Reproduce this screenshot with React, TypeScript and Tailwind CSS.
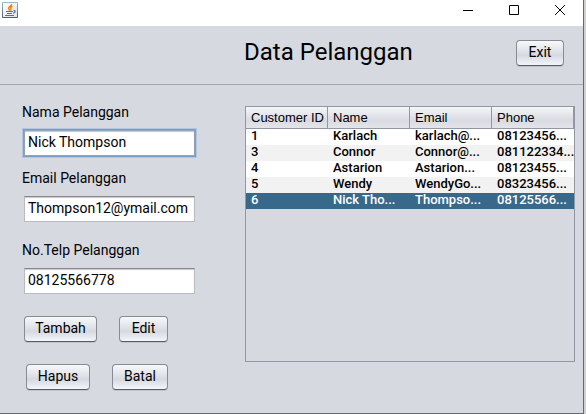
import { useState } from "react";

const columns = ["Customer ID", "Name", "Email", "Phone"];

const customers = [
  ["1", "Karlach", "karlach@...", "08123456..."],
  ["3", "Connor", "Connor@...", "081122334..."],
  ["4", "Astarion", "Astarion...", "08123455..."],
  ["5", "Wendy", "WendyGo...", "08323456..."],
  ["6", "Nick Tho...", "Thompso...", "08125566..."],
];

function JavaIcon() {
  return (
    <svg width="16" height="16" viewBox="0 0 16 16" aria-hidden="true">
      <defs>
        <linearGradient id="frame" x1="0" y1="0" x2="0" y2="1">
          <stop offset="0" stopColor="#9db9cc" />
          <stop offset="1" stopColor="#3f5f78" />
        </linearGradient>
        <linearGradient id="face" x1="0" y1="0" x2="1" y2="1">
          <stop offset="0" stopColor="#ffffff" />
          <stop offset="1" stopColor="#dfe4e8" />
        </linearGradient>
      </defs>
      <rect width="16" height="16" rx="1" fill="url(#frame)" />
      <rect x="1" y="1" width="14" height="14" fill="url(#face)" />
      <path d="M9.500 2c.6 1.700-3 2.600-3 4.200 0 1 1 1.500 1.500 2.500M10.500 4.200c-1.500.7-2.300 1.500-1.700 2.400.4.700.1 1.400-.4 1.900" fill="none" stroke="#ee8324" strokeWidth="1.500" />
      <path d="M4 9.500h7M5 11.500h5M11.500 8.500c2.400-.3 2.200 2.200-.4 2.600M3 13.500h9" fill="none" stroke="#4f7390" strokeWidth="1.200" />
    </svg>
  );
}

function PushButton({ label, className }: { label: string; className: string }) {
  return (
    <button
      type="button"
      className={`h-[26px] rounded border border-[#888b93] border-b-[#595b61] bg-linear-to-b from-[#f8f9fb] via-[#d6d9e0] via-60% to-[#f2f5fa] pb-0.5 text-center text-sm leading-5 shadow-[0_1px_0_#bfc2ca] ${className}`}
    >
      {label}
    </button>
  );
}

function Field({
  id,
  label,
  initial,
  focused,
}: {
  id: string;
  label: string;
  initial: string;
  focused?: boolean;
}) {
  const [value, setValue] = useState(initial);
  return (
    <div className="flex flex-col gap-2">
      <label htmlFor={id} className="-ml-0.5 text-sm leading-5">
        {label}
      </label>
      <input
        id={id}
        value={value}
        onChange={(e) => setValue(e.target.value)}
        className={`h-[26px] w-full border bg-white px-[3px] pb-0.5 text-sm leading-5 outline-none ${
          focused
            ? "border-[#8fa3ba] shadow-[inset_0_1px_1px_#c8c8c8,0_0_0_1px_#76a0cd,0_0_0_2px_#b3c6dd]"
            : "border-[#b9bbc0] border-t-[#86888e] shadow-[inset_0_1px_1px_#c8c8c8]"
        }`}
      />
    </div>
  );
}

export default function App() {
  return (
    <div className="flex h-screen bg-[#d2d1cf] pr-0.5 font-['Roboto','Liberation_Sans',sans-serif] text-black">
      <div className="flex min-w-0 flex-1 flex-col border-r border-b border-[#68696e] bg-[#d6d9e0]">
        <div className="flex h-[26px] shrink-0 items-start justify-between bg-white pt-0.5 pl-0.5">
          <JavaIcon />
          <div className="flex">
            {[
              ["Minimize", "M0 5.500h10"],
              ["Maximize", "M.5.500h9v9h-9z"],
              ["Close", "M0 0l10 10M10 0L0 10"],
            ].map(([name, path]) => (
              <button
                key={name}
                type="button"
                aria-label={name}
                className="flex h-4 w-[46px] items-center justify-center"
              >
                <svg width="10" height="10" viewBox="0 0 10 10" fill="none" stroke="#000" aria-hidden="true">
                  <path d={path} />
                </svg>
              </button>
            ))}
          </div>
        </div>

        <header className="flex h-[59px] shrink-0 items-center border-b border-[#a5a8b0] pr-[19px] pb-1 pl-[244px]">
          <h1 className="flex-1 pb-0.5 text-2xl leading-8 whitespace-nowrap">Data Pelanggan</h1>
          <PushButton label="Exit" className="w-12" />
        </header>

        <main className="flex min-h-0 flex-1 gap-[50px] pr-2 pb-[51px] pl-6">
          <form className="w-[171px] shrink-0 pt-[17px]">
            <div className="flex flex-col gap-3">
              <Field id="name" label="Nama Pelanggan" initial="Nick Thompson" focused />
              <Field id="email" label="Email Pelanggan" initial="Thompson12@ymail.com" />
            </div>
            <div className="pt-[18px]">
              <Field id="phone" label="No.Telp Pelanggan" initial="08125566778" />
            </div>
            <div className="flex gap-[22px] pt-[22px]">
              <PushButton label="Tambah" className="w-[73px]" />
              <PushButton label="Edit" className="w-[49px]" />
            </div>
            <div className="flex gap-[22px] pt-[22px] pl-0.5">
              <PushButton label="Hapus" className="w-16" />
              <PushButton label="Batal" className="w-14" />
            </div>
          </form>

          <section className="mt-[21px] min-w-0 flex-1 border border-[#9297a1]">
            <table className="w-full table-fixed border-separate border-spacing-0 text-left">
              <thead>
                <tr className="bg-linear-to-b from-[#f5f6f8] via-[#d8dbe1] via-60% to-[#e4e6eb]">
                  {columns.map((c) => (
                    <th
                      key={c}
                      className="h-[22px] border-r border-b border-[#9297a1] p-0 pl-[5px] font-['Liberation_Sans',sans-serif] text-[13px] leading-5 font-normal whitespace-nowrap"
                    >
                      {c}
                    </th>
                  ))}
                </tr>
              </thead>
              <tbody>
                {customers.map((row) => (
                  <tr
                    key={row[0]}
                    className="bg-white even:bg-[#f2f2f2] last:bg-[#39698a] last:text-white"
                  >
                    {row.map((cell, i) => (
                      <td key={i} className="h-4 p-0 pl-[5px] align-top text-[13px] leading-[14px] font-medium whitespace-nowrap">
                        {cell}
                      </td>
                    ))}
                  </tr>
                ))}
              </tbody>
            </table>
          </section>
        </main>
      </div>
    </div>
  );
}
